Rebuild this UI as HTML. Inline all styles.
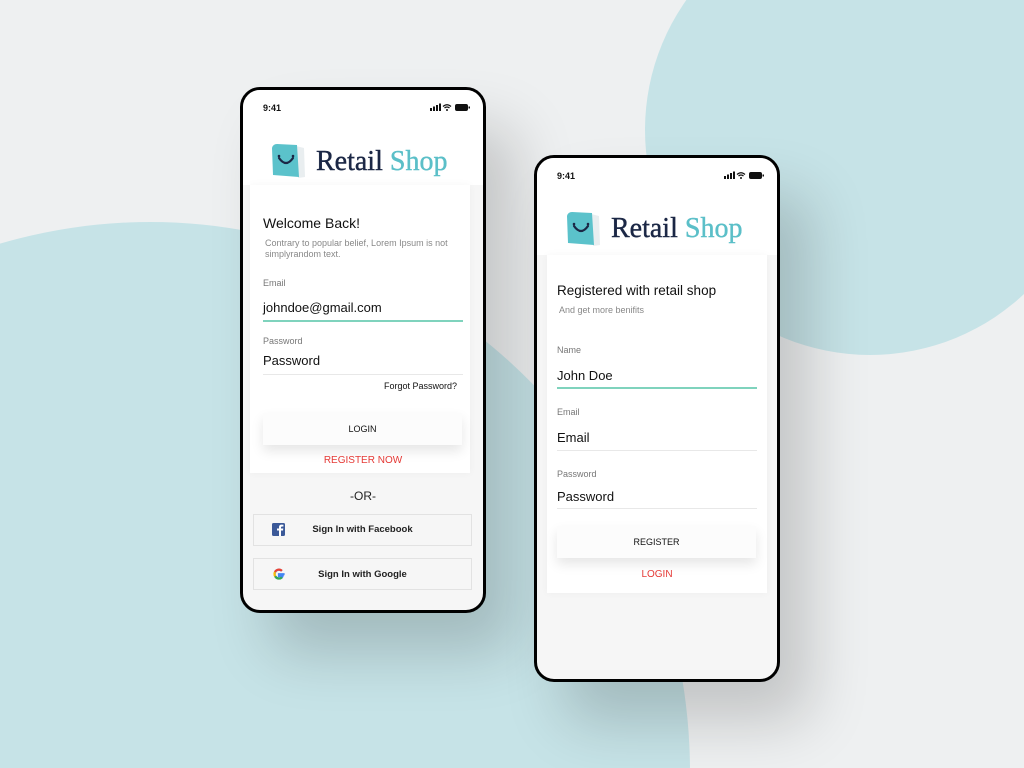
<!DOCTYPE html>
<html style="width:1024px;height:768px;overflow:hidden"><head><meta charset="utf-8"><style>
*{margin:0;padding:0;box-sizing:border-box}
body{width:1024px;height:768px;overflow:hidden;background:#eef0f1;position:relative;font-family:"Liberation Sans",sans-serif;color:#111}
.a{position:absolute}
.clip{position:absolute;left:0;top:0;width:1024px;height:768px;overflow:hidden}
.blob1{position:absolute;left:-390px;top:222px;width:1080px;height:1100px;border-radius:50%;background:#c6e3e7}
.blob2{position:absolute;left:645px;top:-95px;width:450px;height:450px;border-radius:50%;background:#c6e3e7}
.phone{position:absolute;width:246px;border:3px solid #000;border-radius:20px;background:#f6f6f6;box-shadow:30px 40px 60px rgba(0,0,0,.18);overflow:hidden}
.t{position:absolute;white-space:nowrap;line-height:1}
.card{position:absolute;background:#fff;box-shadow:0 0 8px rgba(0,0,0,.04)}
.lbl{font-size:9px;color:#777}
.val{font-size:13px;color:#111}
.line{position:absolute;height:1px;background:#e8e8e8}
.btn{position:absolute;background:#fcfcfc;box-shadow:0 6px 12px rgba(0,0,0,.10);font-size:9px;text-align:center;color:#111}
.red{color:#e53935;font-size:10px}
.logo{font-family:"Liberation Serif",serif;font-size:28px;color:#1b2745;-webkit-text-stroke:0.4px}
.logo span{color:#5bbfc8}
.sb{position:absolute;width:219px;height:32px;border:1px solid #e2e2e2;background:#f6f6f6;font-size:9.5px;font-weight:bold;color:#222}
</style></head><body>
<div class="clip"><div class="blob1"></div><div class="blob2"></div></div>

<!-- left phone -->
<div class="phone" style="left:240px;top:87px;height:526px;">
 <div style="position:absolute;left:0;top:0;width:100%;height:95px;background:#fff"></div>
 <div class="t" style="left:20px;top:14px;font-size:9px;font-weight:bold">9:41</div>
 <svg class="a" style="left:187px;top:13px" width="32" height="9" viewBox="0 0 32 9"><rect x="0" y="5" width="2" height="3" fill="#111"/><rect x="3" y="3.5" width="2" height="4.5" fill="#111"/><rect x="6" y="2" width="2" height="6" fill="#111"/><rect x="9" y="0.5" width="2" height="7.5" fill="#111"/><path d="M13 3.5 Q17 0 21 3.5 M14.5 5 Q17 3 19.5 5" stroke="#111" stroke-width="1.3" fill="none"/><circle cx="17" cy="7" r="1" fill="#111"/></svg>
 <svg class="a" style="left:212px;top:13px" width="16" height="9"><rect x="0.5" y="1.5" width="12" height="6" rx="1.5" fill="#111" stroke="#111"/><rect x="13.5" y="3.5" width="1.5" height="2" fill="#111"/></svg>
 <svg class="a" style="left:25px;top:52px" width="40" height="38" viewBox="0 0 40 38"><path d="M28 4 L36 6 L37 35 L30 36 Z" fill="#e9eef0"/><path d="M4 6 Q5 2 9 2 L29 3 L31 35 L5 33 Z" fill="#5bc2cb"/><path d="M11 16 Q18 26 25 16" stroke="#1b2745" stroke-width="2.2" fill="none" stroke-linecap="round"/><circle cx="11" cy="14" r="1.3" fill="#1b2745"/><circle cx="25" cy="14" r="1.3" fill="#1b2745"/></svg>
 <div class="t logo" style="left:73px;top:58px">Retail <span>Shop</span></div>
 <div class="card" style="left:7px;top:95px;width:220px;height:288px"></div>
 <div class="t" style="left:20px;top:126px;font-size:14px;color:#111">Welcome Back!</div>
 <div class="t" style="left:22px;top:148px;font-size:9px;color:#888;line-height:11px">Contrary to popular belief, Lorem Ipsum is not<br>simplyrandom text.</div>
 <div class="t lbl" style="left:20px;top:189px">Email</div>
 <div class="t val" style="left:20px;top:211px">johndoe@gmail.com</div>
 <div class="line" style="left:20px;top:230px;width:200px;background:#7fd3bd;height:1.5px"></div>
 <div class="t lbl" style="left:20px;top:247px">Password</div>
 <div class="t val" style="left:20px;top:264px">Password</div>
 <div class="line" style="left:20px;top:284px;width:200px"></div>
 <div class="t" style="left:141px;top:292px;font-size:9px;color:#111">Forgot Password?</div>
 <div class="btn" style="left:20px;top:323px;width:199px;height:32px;line-height:32px">LOGIN</div>
 <div class="t red" style="left:0;width:240px;text-align:center;top:366px">REGISTER NOW</div>
 <div class="t" style="left:0;width:240px;text-align:center;top:400px;font-size:12px;color:#222">-OR-</div>
 <div class="sb" style="left:10px;top:424px"><svg class="a" style="left:18px;top:8px" width="13" height="13"><rect width="13" height="13" rx="1.5" fill="#3b5998"/><path d="M9 13 V7.5 H11 L11.3 5.5 H9 V4.3 Q9 3.5 10 3.5 H11.4 V1.8 Q10.5 1.6 9.6 1.6 Q7 1.6 7 4 V5.5 H5 V7.5 H7 V13 Z" fill="#fff"/></svg><div class="t" style="left:0;width:100%;text-align:center;top:10px">Sign In with Facebook</div></div>
 <div class="sb" style="left:10px;top:468px"><svg class="a" style="left:18px;top:8px" width="14" height="14" viewBox="0 0 14 14"><path d="M12.6 7.2 H7 V8.9 H10.6 Q10 11.3 7 11.3 A4.3 4.3 0 1 1 9.9 3.9" stroke="#4285f4" stroke-width="2.2" fill="none"/><path d="M9.9 3.9 A4.3 4.3 0 0 0 3 5" stroke="#ea4335" stroke-width="2.2" fill="none"/><path d="M3 5 A4.3 4.3 0 0 0 3.2 9.3" stroke="#fbbc05" stroke-width="2.2" fill="none"/><path d="M3.2 9.3 A4.3 4.3 0 0 0 10 10.3" stroke="#34a853" stroke-width="2.2" fill="none"/></svg><div class="t" style="left:0;width:100%;text-align:center;top:11px">Sign In with Google</div></div>
</div>

<!-- right phone -->
<div class="phone" style="left:534px;top:155px;height:527px;">
 <div style="position:absolute;left:0;top:0;width:100%;height:97px;background:#fff"></div>
 <div class="t" style="left:20px;top:14px;font-size:9px;font-weight:bold">9:41</div>
 <svg class="a" style="left:187px;top:13px" width="32" height="9" viewBox="0 0 32 9"><rect x="0" y="5" width="2" height="3" fill="#111"/><rect x="3" y="3.5" width="2" height="4.5" fill="#111"/><rect x="6" y="2" width="2" height="6" fill="#111"/><rect x="9" y="0.5" width="2" height="7.5" fill="#111"/><path d="M13 3.5 Q17 0 21 3.5 M14.5 5 Q17 3 19.5 5" stroke="#111" stroke-width="1.3" fill="none"/><circle cx="17" cy="7" r="1" fill="#111"/></svg>
 <svg class="a" style="left:212px;top:13px" width="16" height="9"><rect x="0.5" y="1.5" width="12" height="6" rx="1.5" fill="#111" stroke="#111"/><rect x="13.5" y="3.5" width="1.5" height="2" fill="#111"/></svg>
 <svg class="a" style="left:26px;top:52px" width="40" height="38" viewBox="0 0 40 38"><path d="M28 4 L36 6 L37 35 L30 36 Z" fill="#e9eef0"/><path d="M4 6 Q5 2 9 2 L29 3 L31 35 L5 33 Z" fill="#5bc2cb"/><path d="M11 16 Q18 26 25 16" stroke="#1b2745" stroke-width="2.2" fill="none" stroke-linecap="round"/><circle cx="11" cy="14" r="1.3" fill="#1b2745"/><circle cx="25" cy="14" r="1.3" fill="#1b2745"/></svg>
 <div class="t logo" style="left:74px;top:57px">Retail <span>Shop</span></div>
 <div class="card" style="left:10px;top:97px;width:220px;height:338px"></div>
 <div class="t" style="left:20px;top:126px;font-size:13.5px;color:#111">Registered with retail shop</div>
 <div class="t" style="left:22px;top:148px;font-size:9px;color:#888">And get more benifits</div>
 <div class="t lbl" style="left:20px;top:188px">Name</div>
 <div class="t val" style="left:20px;top:211px">John Doe</div>
 <div class="line" style="left:20px;top:229px;width:200px;background:#7fd3bd;height:1.5px"></div>
 <div class="t lbl" style="left:20px;top:250px">Email</div>
 <div class="t val" style="left:20px;top:273px">Email</div>
 <div class="line" style="left:20px;top:292px;width:200px"></div>
 <div class="t lbl" style="left:20px;top:312px">Password</div>
 <div class="t val" style="left:20px;top:332px">Password</div>
 <div class="line" style="left:20px;top:350px;width:200px"></div>
 <div class="btn" style="left:20px;top:368px;width:199px;height:32px;line-height:32px">REGISTER</div>
 <div class="t red" style="left:0;width:240px;text-align:center;top:412px">LOGIN</div>
</div>
</body></html>
